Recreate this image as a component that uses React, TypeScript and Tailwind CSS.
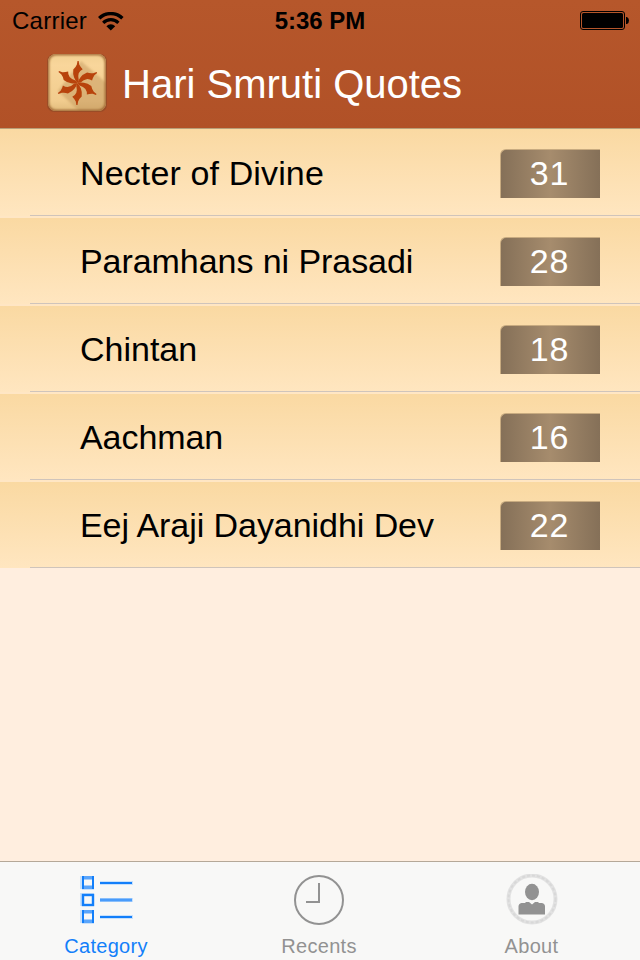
import clsx from "clsx";

const categories = [
  { name: "Necter of Divine", count: 31, spacing: "pt-0.5 tracking-[0.13px]" },
  { name: "Paramhans ni Prasadi", count: 28, spacing: "tracking-[-0.06px]" },
  { name: "Chintan", count: 18, spacing: "tracking-normal" },
  { name: "Aachman", count: 16, spacing: "tracking-[-0.06px]" },
  { name: "Eej Araji Dayanidhi Dev", count: 22, spacing: "tracking-[-0.06px]" },
];

const WifiIcon = () => (
  <svg width="26" height="19" viewBox="0 0 26 19" fill="none" stroke="#000">
    <path d="M1.2 6.3a16.6 16.6 0 0 1 23.200 0" strokeWidth="3.4" />
    <path d="M5.2 10.8a10.8 10.8 0 0 1 15.200 0" strokeWidth="3.200" />
    <path d="M8.4 14.200a6.200 6.200 0 0 1 8.800 0L12.8 18.600z" fill="#000" stroke="none" />
  </svg>
);

const BatteryIcon = () => (
  <svg width="49" height="19" viewBox="0 0 49 19">
    <rect x=".5" y=".5" width="44" height="18" rx="2.5" fill="none" stroke="#000" />
    <rect x="2" y="2" width="41" height="15" rx="1.5" />
    <path d="M46 6h1q2 1 2 3.5T47 13h-1z" />
  </svg>
);

const petals = [0, 60, 120, 180, 240, 300];

const AppLogo = () => (
  <svg width="60" height="60" viewBox="0 0 60 60">
    <defs>
      <linearGradient id="wood" x1="0" y1="0" x2="0" y2="1">
        <stop offset="0" stopColor="#f1cf91" />
        <stop offset=".2" stopColor="#f9d69b" />
        <stop offset=".8" stopColor="#f1cc8e" />
        <stop offset="1" stopColor="#dfb879" />
      </linearGradient>
      <filter id="soft" x="-10%" y="-10%" width="120%" height="120%">
        <feGaussianBlur stdDeviation="1" />
      </filter>
      <clipPath id="tile">
        <rect x="1" y="1" width="58" height="57" rx="8" />
      </clipPath>
    </defs>
    <rect x="0" y="1" width="60" height="58" rx="7" fill="#8b4926" opacity=".6" />
    <g clipPath="url(#tile)">
      <rect width="60" height="60" fill="url(#wood)" />
      <path d="M34 8L64 34V60H34L11 38Z" fill="#b98e55" opacity=".42" filter="url(#soft)" />
      <rect x="1" y="1" width="58" height="57" rx="8" fill="none" stroke="#9b642f" strokeWidth="2.5" filter="url(#soft)" />
    </g>
    <g fill="#b8430c">
      {petals.map((angle) => (
        <path
          key={angle}
          transform={`translate(30.5 30) rotate(${angle})`}
          d="M0 -22L1.200 -22L1.700 -18.500Q3 -16 5.200 -13.800Q2.400 -12.500 1.200 -9.800Q.2 -7 1.200 -3L0 0Q-2 -2 -3.400 -5.500Q-4.800 -9 -4.200 -13.500Q-1.800 -15.500 -.6 -18.500Z"
        />
      ))}
    </g>
  </svg>
);

const ListIcon = () => (
  <svg width="54" height="50" viewBox="0 0 54 50">
    <path d="M1 1h2v13H1zM1 18h2v13H1zM1 35h2v13H1z" fill="#c9e1fb" />
    <path d="M3 14h12v1H3zM3 18h12v1H3zM3 48h12v1H3z" fill="#c9e1fb" />
    <path d="M21 6h33v4H21zM21 23h33v4H21zM21 40h33v4H21z" fill="#c9e1fb" />
    <path d="M3 3h12M3 12h12M3 37h12M3 46h12" stroke="#5aa5fb" strokeWidth="4" />
    <path d="M4 1v13M14 1v13M4 35v13M14 35v13" stroke="#137ffa" strokeWidth="2" />
    <path d="M5 4.5h8v6H5zM5 38.5h8v6H5z" fill="#f8f8f7" />
    <rect x="4" y="20" width="10" height="10" fill="none" stroke="#137ffa" strokeWidth="2.4" />
    <path d="M21 8h32M21 42h32" stroke="#137ffa" strokeWidth="2" />
    <path d="M21 25h32" stroke="#4a9cfb" strokeWidth="3" />
  </svg>
);

const ClockIcon = () => (
  <svg width="50" height="50" viewBox="0 0 50 50" fill="none" stroke="#929292" strokeWidth="2">
    <circle cx="25" cy="25" r="24" />
    <path d="M25 8V27H12" />
  </svg>
);

const PersonIcon = () => (
  <svg width="52" height="52" viewBox="0 0 52 52">
    <circle cx="26" cy="25" r="23.5" fill="none" stroke="#e2e2e2" strokeWidth="4" />
    <circle cx="26" cy="25" r="23.5" fill="none" stroke="#d8d8d8" strokeWidth="2" strokeDasharray="3 2" />
    <ellipse cx="26" cy="18" rx="7" ry="8.2" fill="#929292" />
    <path
      d="M20 28h3l3 2.5 3-2.5h3l1 1h3q3 .5 3 3.500v8H12.5v-8q0-3 3-3.5h3.5z"
      fill="#929292"
    />
  </svg>
);

const tabs = [
  { label: "Category", Icon: ListIcon, active: true, width: "w-[212px]" },
  { label: "Recents", Icon: ClockIcon, active: false, width: "w-[214px]" },
  { label: "About", Icon: PersonIcon, active: false, width: "w-[211px]" },
];

const App = () => {
  return (
    <div className="w-[640px] h-[960px] flex flex-col overflow-hidden bg-[#ffeedf] font-['Liberation_Sans',Arial,sans-serif]">
      <header className="h-32 shrink-0 bg-linear-to-b from-[#b6572b] to-[#b15127]">
        <div className="h-[41px] pt-px grid grid-cols-3 items-center text-2xl leading-10 text-black">
          <div className="flex items-center gap-[11px] pl-3">
            <span className="tracking-[0.25px]">Carrier</span>
            <WifiIcon />
          </div>
          <span className="text-center font-bold text-2xl leading-10">5:36 PM</span>
          <div className="flex justify-end pr-[11px] pb-px">
            <BatteryIcon />
          </div>
        </div>
        <div className="flex items-start gap-[15px] pl-[47px] pt-3">
          <AppLogo />
          <h1 className="pt-px text-[40px] leading-[60px] text-white">Hari Smruti Quotes</h1>
        </div>
      </header>

      <ul className="shrink-0 border-t border-[#b99f78]">
        {categories.map(({ name, count, spacing }) => (
          <li
            key={name}
            className="h-[88px] first:h-[87px] pl-[30px] bg-linear-to-b from-[#fad9a2] to-[#ffe6c0] border-t-2 first:border-t-0 border-[#ffe6c4]"
          >
            <div className="h-full flex items-start justify-between border-b border-[#cfc4bb] pl-[50px] pr-10">
              <span
                className={clsx(
                  "self-center text-[34px] leading-[50px] text-black",
                  spacing
                )}
              >
                {name}
              </span>
              <span className="self-end mb-[17px] w-[100px] h-[49px] rounded-tl-md border-t border-l border-[#c8ab80] bg-linear-to-r from-[#857058] via-[#a68c6d] to-[#857058] pr-0.5 text-center text-[34px] leading-[47px] tracking-[0.8px] text-white">
                {count}
              </span>
            </div>
          </li>
        ))}
      </ul>

      <nav className="mt-auto h-[99px] shrink-0 flex border-t border-[#b5a898] bg-[#f8f8f7]">
        {tabs.map(({ label, Icon, active, width }) => (
          <button
            key={label}
            className={clsx(
              "flex flex-col items-center text-xl tracking-[0.3px]",
              width,
              active ? "text-[#137ffa]" : "text-[#929292]"
            )}
          >
            <span className="h-[70px] flex items-center pt-1.5">
              <Icon />
            </span>
            <span className="leading-7">{label}</span>
          </button>
        ))}
      </nav>
    </div>
  );
};

export default App;
